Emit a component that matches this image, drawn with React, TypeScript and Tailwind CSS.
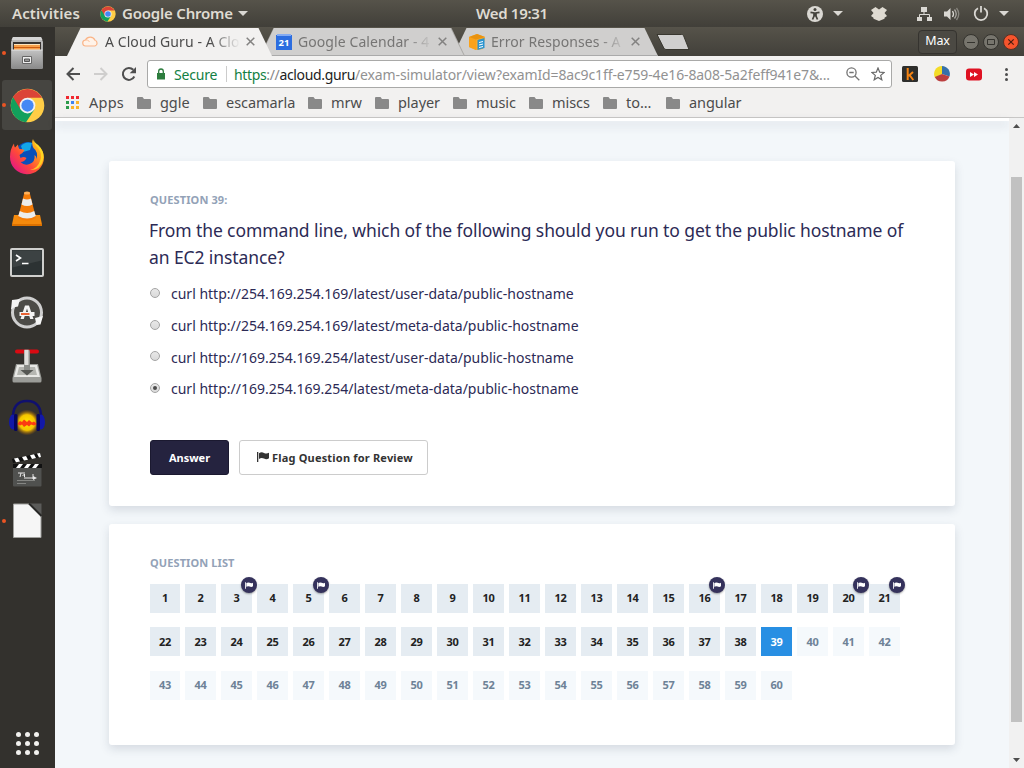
import React from "react";

const flaggedQuestions = [3, 5, 16, 20, 21];
const currentQuestion = 39;

const answers = [
  "curl http://254.169.254.169/latest/user-data/public-hostname",
  "curl http://254.169.254.169/latest/meta-data/public-hostname",
  "curl http://169.254.169.254/latest/user-data/public-hostname",
  "curl http://169.254.169.254/latest/meta-data/public-hostname",
];

const bookmarks = [
  { name: "ggle", width: "w-[66px]" },
  { name: "escamarla", width: "w-[105px]" },
  { name: "mrw", width: "w-[67px]" },
  { name: "player", width: "w-[78px]" },
  { name: "music", width: "w-[76px]" },
  { name: "miscs", width: "w-[74px]" },
  { name: "to...", width: "w-[63px]" },
  { name: "angular", width: "w-[90px]" },
];

function ChromeLogo({ className }: { className: string }) {
  return (
    <svg viewBox="0 0 48 48" className={className}>
      <circle cx="24" cy="24" r="23" fill="#ffcd46" />
      <path d="M24 24 4.1 12.5A23 23 0 0 0 22 46.9L33.5 29.5Z" fill="#12a05c" />
      <path d="M4.1 12.5A23 23 0 0 1 43.9 13.5H24L14.5 29.5Z" fill="#db4437" />
      <circle cx="24" cy="24" r="10.8" fill="#f1f1f1" />
      <circle cx="24" cy="24" r="8.4" fill="#4688f4" />
    </svg>
  );
}

function FilesIcon() {
  return (
    <svg viewBox="0 0 36 36" className="size-9">
      <defs>
        <linearGradient id="cabinet" x1="0" y1="0" x2="0" y2="1">
          <stop offset="0" stopColor="#c2c2c2" />
          <stop offset="1" stopColor="#8c8c8c" />
        </linearGradient>
      </defs>
      <path d="M4 2h28l2 5v26q0 1-1.500 1h-29Q2 34 2 33V7Z" fill="url(#cabinet)" />
      <path d="M4 2h28l1.500 3H2.500Z" fill="#d5d5d5" />
      <path d="M4 7h28v10H4Z" fill="#393431" />
      <path d="M5 10h26v5H5Z" fill="#f7a04a" />
      <path d="M5 12.500h26" stroke="#cf5c12" />
      <path d="M5 9.500h26" stroke="#ffe4bc" />
      <path d="M3 15h30v18H3Z" fill="url(#cabinet)" />
      <path d="M2.500 15h31" stroke="#e3e3e3" />
      <path d="M13.500 21.500h9v7h-9Z" fill="#eee" stroke="#666" />
      <path d="M15.500 24h5v2.500h-5Z" fill="#999" stroke="#555" />
    </svg>
  );
}

function FirefoxIcon() {
  return (
    <svg viewBox="0 0 36 36" className="size-9">
      <defs>
        <linearGradient id="fox" x1="1" y1="0" x2="0.100" y2="0.900">
          <stop offset="0" stopColor="#ffe226" />
          <stop offset="0.350" stopColor="#ff9a1e" />
          <stop offset="0.650" stopColor="#ff4a38" />
          <stop offset="1" stopColor="#e31587" />
        </linearGradient>
      </defs>
      <circle cx="19" cy="16" r="13" fill="#0a4fb9" />
      <path d="M12 7q4-5 11-3l-2 7-7 2Z" fill="#12a6e8" />
      <path d="M5 4.500q0 3 1 4l3-3q0 3 1.500 4.500 3 0 5 1-2 4-5 5l1 3q3-2 6 0-2 4-6 4 4 4 9 2 6-2 5-9 2 1 2 4 2-7-3-11Q22 4 24 0q1 4 5 6 6 6 6 12.500A17 17 0 0 1 1 18Q1 10 5 4.500Z" fill="url(#fox)" />
      <path d="M25 1q0 4 4 8 5 6 2 13-2 7-10 9 11 0 13-10 2-9-5-15-4-3-4-5Z" fill="#ffe023" opacity=".8" />
    </svg>
  );
}

function VlcIcon() {
  return (
    <svg viewBox="0 0 36 36" className="size-9">
      <path d="m5 24-2 9.500q0 1.500 2 1.500h26q2 0 2-1.500L31 24Z" fill="#f58a0c" />
      <path d="M3 33h30v2H3Z" fill="#dc7100" />
      <path d="M15.500 1h5L27 27q-9 5-18 0Z" fill="#f57c08" />
      <path d="m14 7.500-1.500 6q5.500 3 11 0L22 7.500q-4 2-8 0ZM10.800 20l-1.600 5q9 5 17.600 0l-1.600-5q-7 4-14.400 0Z" fill="#ececec" />
      <path d="M15.500 1q2.500-1 5 0l.5 2q-3 1-6 0Z" fill="#ffb15a" />
    </svg>
  );
}

function TerminalIcon() {
  return (
    <svg viewBox="0 0 36 36" className="size-9">
      <rect x="2" y="6" width="32" height="27" rx="1" fill="#2c3233" stroke="#cfcfcd" strokeWidth="2" />
      <path d="M3.500 7.500h29v10l-29 7Z" fill="#3c4243" />
      <path d="m7 12 4.500 3L7 18M13 20.500h6.500" fill="none" stroke="#fff" strokeWidth="1.600" />
    </svg>
  );
}

function UpdaterIcon() {
  return (
    <svg viewBox="0 0 36 36" className="size-9">
      <circle cx="18" cy="17.500" r="14.500" fill="#4c4b47" stroke="#cfcfcf" strokeWidth="3" />
      <path d="m3 5 8-1-2 7.500q-4 0-7 3Zm31 16-8 2 1.500 7 4-.5Z" fill="#f5f5f5" />
      <path d="M11.500 24 16 10.500h4L24.500 24h-3.300L18 13.500 14.800 24Z" fill="#f4f4f4" />
      <path d="M10.500 19h15" stroke="#f4f4f4" strokeWidth="4" />
      <path d="M12 19h8.500" stroke="#e95420" strokeWidth="1.800" />
    </svg>
  );
}

function InstallerIcon() {
  return (
    <svg viewBox="0 0 36 36" className="size-9">
      <path d="m7 17-3.500 14v3q0 1.500 1.500 1.500h26q1.500 0 1.500-1.500v-3L29 17Z" fill="#9b9c98" />
      <path d="m8 18-3 12h26l-3-12Z" fill="#e8e8e5" />
      <path d="m10 20-2 8h20l-2-8Z" fill="#b5b6b1" />
      <rect x="6" y="2.500" width="24" height="4" rx="2" fill="#d90a12" />
      <path d="M15 20h6v3h3.500L18 28.500 11.500 23H15Z" fill="#555753" />
      <path d="M16 2.500h3q2 0 2 2V23h-6V3.500q0-1 1-1Z" fill="#8b8d89" />
      <path d="M15.500 3h4v15h-4Z" fill="#dededb" />
    </svg>
  );
}

function AudacityIcon() {
  return (
    <svg viewBox="0 0 36 36" className="size-9">
      <defs>
        <radialGradient id="sound">
          <stop offset="0" stopColor="#ffe800" />
          <stop offset="0.600" stopColor="#f5c400" />
          <stop offset="1" stopColor="#a85b00" stopOpacity="0" />
        </radialGradient>
      </defs>
      <ellipse cx="18" cy="23.500" rx="13" ry="13" fill="url(#sound)" />
      <path d="m8 25 3-3 2 1 2-2.500 3 2.500 2-2 3 2.500 2-1 3 2.500-3 1.500-3-1-2 2-2-1.500-3 2-2-2.500-2 1Z" fill="#fb3c12" />
      <path d="M4 21Q3 2 18 2t14 19" fill="none" stroke="#10106f" strokeWidth="2.600" />
      <ellipse cx="4" cy="23" rx="4" ry="7.500" fill="#1218a8" />
      <ellipse cx="32" cy="23" rx="4" ry="7.500" fill="#1218a8" />
      <rect x="5" y="15" width="3.500" height="17" rx="1.500" fill="#06065c" />
      <rect x="27.500" y="15" width="3.500" height="17" rx="1.500" fill="#06065c" />
    </svg>
  );
}

function ClapperIcon() {
  return (
    <svg viewBox="0 0 36 36" className="size-9">
      <rect x="4" y="13" width="28.500" height="22.500" rx="1" fill="#50514f" />
      <path d="M4 13h29v4H4Z" fill="#111" />
      <path d="m7 17 3-4h4l-3 4Zm8 0 3-4h4l-3 4Zm8 0 3-4h4l-3 4Z" fill="#fff" />
      <path d="m3 8 28-6 1 4L4 12Z" fill="#111" />
      <path d="m5 7.600 4-.9 2 3.800-4 .8Zm8-1.700 4-.9 2 3.800-4 .8Zm8-1.700 4-.9 2 3.800-4 .8Zm7-1.600 3-.6 1 4-2 .4Z" fill="#fff" />
      <path d="M9 22h7M12 22l-1 4M13.500 25l2-2v3M15 27h11M24 23v5" fill="none" stroke="#e8e8e8" />
      <path d="m24 25 4 2-4 2Z" fill="#e8e8e8" />
      <path d="M8 29.500h18M8 32.500h9" stroke="#858683" />
    </svg>
  );
}

function DocumentIcon() {
  return (
    <svg viewBox="0 0 36 36" className="size-9">
      <path d="M4.500 1h17L32 12v22.500H4.500Z" fill="#f6f6f6" stroke="#a0a09d" />
      <path d="M20 .5h12.500V13Z" fill="#5b5b59" />
      <path d="m20 .5 12.500 12.500" stroke="#282826" strokeWidth="2" />
    </svg>
  );
}

const dockApps = [
  { name: "files", icon: <FilesIcon />, running: true, active: false },
  { name: "chrome", icon: <ChromeLogo className="size-[35px]" />, running: true, active: true },
  { name: "firefox", icon: <FirefoxIcon />, running: false, active: false },
  { name: "vlc", icon: <VlcIcon />, running: false, active: false },
  { name: "terminal", icon: <TerminalIcon />, running: false, active: false },
  { name: "updater", icon: <UpdaterIcon />, running: false, active: false },
  { name: "installer", icon: <InstallerIcon />, running: false, active: false },
  { name: "audacity", icon: <AudacityIcon />, running: false, active: false },
  { name: "clapper", icon: <ClapperIcon />, running: false, active: false },
  { name: "document", icon: <DocumentIcon />, running: true, active: false },
];

function Caret() {
  return (
    <svg viewBox="0 0 10 5" className="h-[5px] w-[10px] shrink-0">
      <path d="M0 0h10L5 5Z" fill="#dad8d3" />
    </svg>
  );
}

function SystemBar() {
  return (
    <header className="grid h-[27px] shrink-0 grid-cols-[476px_72px_1fr] items-center bg-linear-to-b from-[#56534a] to-[#413f39] text-[15px] font-semibold text-[#dfdbd2]">
      <div className="flex items-center pl-3">
        <span className="w-[88px] tracking-[0.1px]">Activities</span>
        <ChromeLogo className="size-4" />
        <span className="ml-1.5 w-[116px] tracking-[-0.2px]">Google Chrome</span>
        <Caret />
      </div>
      <span className="whitespace-nowrap tracking-[-0.3px]">Wed 19:31</span>
      <div className="flex items-center pl-[259px]">
        <svg viewBox="0 0 16 16" className="size-4">
          <circle cx="8" cy="8" r="8" fill="#dad8d3" />
          <circle cx="8" cy="3.600" r="1.500" fill="#45433d" />
          <path d="M3.500 6.300 7 7v3l-1.500 3.500M12.500 6.300 9 7v3l1.500 3.500M8 6.500v4" fill="none" stroke="#45433d" strokeWidth="1.700" />
        </svg>
        <span className="ml-2.5 flex"><Caret /></span>
        <svg viewBox="0 0 16 14" className="ml-[28px] h-[14px] w-4">
          <path d="m4.500 0 3.500 2.500L11.500 0 16 3l-2.500 3L16 9l-2.500 1.700v1L8 14l-5.500-2.300v-1L0 9l2.500-3L0 3Z" fill="#dfdbd2" />
        </svg>
        <svg viewBox="0 0 16 16" className="ml-[29px] size-4">
          <path d="M5 1h6v5H5ZM1 11h5v4H1Zm10 0h5v4h-5Z" fill="#dad8d3" />
          <path d="M8 6v3M3.500 11V8.500h10V11" fill="none" stroke="#dad8d3" />
        </svg>
        <svg viewBox="0 0 16 16" className="ml-3 size-4">
          <path d="M0 5.500h3L6.500 2v12L3 10.500H0Z" fill="#dad8d3" />
          <path d="M8.500 5q2 3 0 6" fill="none" stroke="#dad8d3" strokeWidth="1.300" />
          <path d="M10.500 3.500q3.500 4.500 0 9" fill="none" stroke="#aaa8a3" strokeWidth="1.300" />
          <path d="M12.500 2q4.500 6 0 12" fill="none" stroke="#88867f" strokeWidth="1.300" />
        </svg>
        <svg viewBox="0 0 16 16" className="ml-[13px] size-4">
          <path d="M5 2.200a6.300 6.300 0 1 0 6 0M8 0v6.500" fill="none" stroke="#dad8d3" strokeWidth="1.800" />
        </svg>
        <span className="ml-[10px] flex"><Caret /></span>
      </div>
    </header>
  );
}

function Dock() {
  return (
    <aside className="flex w-[55px] shrink-0 flex-col bg-[#33312d]">
      {dockApps.map((app) => (
        <div key={app.name} className="flex h-[52px] shrink-0 items-center">
          <div className={"ml-0.5 flex size-[50px] items-center rounded-[3px] " + (app.active ? "bg-[#464541]" : "")}>
            <span className={"size-[4px] shrink-0 rounded-full " + (app.running ? "bg-[#ea5423]" : "")} />
            <span className="flex w-[42px] justify-center">{app.icon}</span>
          </div>
        </div>
      ))}
      <div className="mt-auto mb-[13px] grid grid-cols-3 gap-[3px] self-start pl-[15px]">
        {Array.from({ length: 9 }, (_, i) => (
          <span key={i} className="m-[0.500px] size-[5px] rounded-full bg-[#f2f1ee]" />
        ))}
      </div>
    </aside>
  );
}

function TabClose() {
  return (
    <svg viewBox="0 0 9 9" className="size-[9px] shrink-0">
      <path d="m.7.7 7.600 7.600M8.300.7.700 8.300" stroke="#838281" strokeWidth="1.500" />
    </svg>
  );
}

function TabStrip() {
  return (
    <div className="flex h-[29px] shrink-0 bg-linear-to-b from-[#56534a] to-[#42403a] text-[14px] tracking-[0.08px]">
      <div className="z-20 ml-3 flex w-[205px] shrink-0 items-center bg-[#f2f1f0] pl-[15px] text-[#4c4c4c] [clip-path:polygon(13.500px_1px,191.500px_1px,205px_100%,0_100%)]">
        <svg viewBox="0 0 17 11" className="h-[11px] w-[17px] shrink-0">
          <path d="M4 10a3 3 0 0 1-.5-6A5.200 5.200 0 0 1 13 4.300 3 3 0 0 1 13 10Z" fill="#fff3e9" stroke="#fab487" strokeWidth="1.200" />
          <path d="M3.500 4Q6 3 7.500 6" fill="none" stroke="#fbc29c" />
        </svg>
        <span className="ml-1.5 w-[135px] overflow-hidden whitespace-nowrap [mask-image:linear-gradient(to_right,#000_78%,transparent_100%)]">A Cloud Guru - A Clo</span>
        <span className="ml-1.5 flex"><TabClose /></span>
      </div>
      <div className="z-10 -ml-3 w-[205px] shrink-0 bg-[#aaa8a5] [clip-path:polygon(13.500px_1px,191.500px_1px,205px_100%,0_100%)]">
        <div className="flex h-full items-center border-b border-[#aaa] bg-[#d0cfce] pt-px pl-4 text-[#767574] [clip-path:polygon(14px_1px,190.500px_1px,204px_100%,1px_100%)]">
          <svg viewBox="0 0 16 16" className="size-4 shrink-0">
            <path d="M0 1h16v15H0Z" fill="#2c6de0" />
            <path d="M1 0h14v2H1Z" fill="#84abf2" />
            <text x="8" y="12" textAnchor="middle" fontSize="9.500" fontWeight="700" fill="#fff" className="tracking-normal">21</text>
          </svg>
          <span className="ml-1.5 w-[135px] overflow-hidden whitespace-nowrap [mask-image:linear-gradient(to_right,#000_80%,transparent_100%)]">Google Calendar - 4</span>
          <span className="ml-[5px] flex"><TabClose /></span>
        </div>
      </div>
      <div className="-ml-3 flex w-[205px] shrink-0 items-center border-b border-[#aaa] bg-[#d0cfce] pt-px pl-4 text-[#767574] [clip-path:polygon(13.500px_1px,191.500px_1px,205px_100%,0_100%)]">
        <svg viewBox="0 0 16 16" className="size-4 shrink-0">
          <path d="m0 3 8-3 8 3-2 12-7 1-7-3Z" fill="#fba928" />
          <path d="m0 3 7 2v11l-7-3Z" fill="#faa21b" />
          <path d="m0 3 8-3 8 3-9 2.500Z" fill="#e8920f" />
          <path d="m8.500 6 7-2v10l-7 2Z" fill="#2a94cf" />
          <path d="m10 8.500 4-1M10 11l4-1m-4 3.500 4-1" stroke="#fff" />
        </svg>
        <span className="ml-1.5 w-[135px] overflow-hidden whitespace-nowrap [mask-image:linear-gradient(to_right,#000_80%,transparent_100%)]">Error Responses - A</span>
        <span className="ml-[5px] flex"><TabClose /></span>
      </div>
      <svg viewBox="0 0 34 16" className="mt-[7px] -ml-[2px] h-4 w-[34px] shrink-0">
        <path d="M1 .5h24.500q1.500 0 2 1L33 15.500H10q-1.500 0-2.200-1.500Z" fill="#d0cfce" stroke="#39372f" />
      </svg>
      <div className="mr-[5px] ml-auto flex shrink-0 items-center gap-1">
        <span className="mr-0.5 flex h-6 w-[39px] items-center justify-center rounded-[4px] border border-[#35332f] bg-[#4b4943] text-[12.500px] tracking-[-0.200px] text-white">Max</span>
        <svg viewBox="0 0 16 16" className="size-4">
          <circle cx="8" cy="8" r="7.500" fill="#77756d" stroke="#34332e" />
          <path d="M4 8.500h8" stroke="#34332e" />
        </svg>
        <svg viewBox="0 0 16 16" className="size-4">
          <circle cx="8" cy="8" r="7.500" fill="#77756d" stroke="#34332e" />
          <path d="M4.500 5.500h7v5h-7Z" fill="none" stroke="#34332e" />
        </svg>
        <svg viewBox="0 0 16 16" className="size-4">
          <circle cx="8" cy="8" r="7.500" fill="#f6542c" stroke="#593024" />
          <path d="m5.300 5.300 5.400 5.400m0-5.400-5.400 5.400" stroke="#4b1d10" strokeWidth="1.200" />
        </svg>
      </div>
    </div>
  );
}

function Toolbar() {
  return (
    <div className="flex h-[36px] shrink-0 items-center pl-[11px]">
      <svg viewBox="0 0 14 14" className="size-[14px]">
        <path d="M14 7H1.500M7.500 1l-6 6 6 6" fill="none" stroke="#4f4f4f" strokeWidth="2" />
      </svg>
      <svg viewBox="0 0 14 14" className="ml-[14px] size-[14px]">
        <path d="M0 7h12.500M6.500 1l6 6-6 6" fill="none" stroke="#cfcecd" strokeWidth="2" />
      </svg>
      <svg viewBox="0 0 16 16" className="ml-[13px] size-4">
        <path d="M13.300 10.500A6 6 0 1 1 12.300 3.800" fill="none" stroke="#4f4f4f" strokeWidth="2" />
        <path d="M15 1v6.300H8.700Z" fill="#4f4f4f" />
      </svg>
      <div className="ml-[10px] flex h-[28px] w-[745px] items-center rounded-[3px] border border-[#a9a9a8] bg-white text-[14px] whitespace-nowrap">
        <svg viewBox="0 0 10 12" className="ml-2 h-3 w-[10px]">
          <path d="M1 5h8v6.500H1Z" fill="#2d7d3e" />
          <path d="M2.700 5V3.300a2.300 2.300 0 0 1 4.600 0V5" fill="none" stroke="#2d7d3e" strokeWidth="1.300" />
        </svg>
        <span className="ml-2 w-[44px] tracking-[-0.2px] text-[#138043]">Secure</span>
        <span className="ml-2 h-4 w-px bg-[#ccc]" />
        <span className="ml-[7px] w-[121px] tracking-[-0.350px]">
          <span className="text-[#138043]">https</span>
          <span className="text-[#888]">://</span>
          <span className="text-[#222]">acloud.guru</span>
        </span>
        <span className="w-[475px] tracking-[-0.120px] text-[#929292]">/exam-simulator/view?examId=8ac9c1ff-e759-4e16-8a08-5a2feff941e7&amp;...</span>
        <svg viewBox="0 0 14 14" className="ml-4 size-[14px]">
          <circle cx="5.500" cy="5.500" r="4.600" fill="none" stroke="#737373" strokeWidth="1.300" />
          <path d="m9 9 4.300 4.300M3.300 5.500h4.400" stroke="#737373" strokeWidth="1.300" />
        </svg>
        <svg viewBox="0 0 14 14" className="ml-[11px] size-[14px]">
          <path d="m7 1 1.700 4.200 4.500.3-3.500 2.900 1.100 4.400L7 10.400l-3.800 2.400 1.100-4.400L.8 5.500l4.500-.3Z" fill="none" stroke="#686868" strokeWidth="1.200" />
        </svg>
      </div>
      <svg viewBox="0 0 16 16" className="ml-[10px] size-4">
        <rect width="16" height="16" rx="1.500" fill="#2e2e2c" />
        <path d="M5.700 2v12M11 6 6.500 10M7.500 9l3.800 5" fill="none" stroke="#f58312" strokeWidth="2" />
      </svg>
      <svg viewBox="0 0 16 16" className="ml-4 size-4">
        <path d="M8 8 1.100 12A8 8 0 0 1 8 0Z" fill="#f4dc27" />
        <path d="M8 8V0a8 8 0 0 1 7.500 10.500Z" fill="#3670aa" />
        <path d="m8 8 7.500 2.500A8 8 0 0 1 .8 11Z" fill="#bc3f3f" />
      </svg>
      <svg viewBox="0 0 16 13" className="ml-4 h-[13px] w-4">
        <rect y=".5" width="16" height="12" rx="3" fill="#df1222" />
        <path d="m4 4 4 2.500V4l4 2.500L8 9V6.500L4 9Z" fill="#fff" />
      </svg>
      <div className="ml-[23px] flex flex-col gap-[2px]">
        <span className="size-[3px] rounded-full bg-[#4d4d4d]" />
        <span className="size-[3px] rounded-full bg-[#4d4d4d]" />
        <span className="size-[3px] rounded-full bg-[#4d4d4d]" />
      </div>
    </div>
  );
}

const appDots = [
  "bg-[#f02830]", "bg-[#f02830]", "bg-[#f02830]",
  "bg-[#2c9a4b]", "bg-[#3f83f2]", "bg-[#fbb32c]",
  "bg-[#2c9a4b]", "bg-[#fbb32c]", "bg-[#fbb32c]",
];

function BookmarkBar() {
  return (
    <div className="flex h-[26px] shrink-0 items-center border-b border-[#c8c7c6] pb-[4px] pl-[11px] text-[14.500px] tracking-[-0.050px] text-[#4c4c4c]">
      <div className="grid grid-cols-3 gap-[2px]">
        {appDots.map((color, i) => (
          <span key={i} className={"size-[3px] " + color} />
        ))}
      </div>
      <span className="ml-[10px] w-[48px] tracking-[0.250px]">Apps</span>
      {bookmarks.map((b) => (
        <div key={b.name} className={"flex shrink-0 items-center gap-[9px] " + b.width}>
          <svg viewBox="0 0 14 12" className="h-3 w-[14px] shrink-0">
            <path d="M1 0h4.500L7 2h6q1 0 1 1v8q0 1-1 1H1q-1 0-1-1V1q0-1 1-1Z" fill="#898989" />
          </svg>
          {b.name}
        </div>
      ))}
    </div>
  );
}

function FlagGlyph({ className }: { className: string }) {
  return (
    <svg viewBox="0 0 12 10" className={className}>
      <path d="M0 0h1.300v10H0ZM2 1.200Q4.500-.4 7 .9t5-.2V6.300Q9.500 7.800 7 6.600T2 6.900Z" fill="currentColor" />
    </svg>
  );
}

function QuestionCard() {
  return (
    <section className="mt-[40px] h-[345px] shrink-0 rounded-[3px] bg-white px-[41px] pt-[31px] shadow-[0_4px_10px_rgba(50,60,90,0.150)]">
      <h2 className="text-[11px] leading-4 font-bold tracking-[0.120px] text-[#93a2b7]">QUESTION 39:</h2>
      <p className="mt-[9px] -ml-px w-[770px] text-[17.500px] leading-[27px] tracking-[-0.100px] text-[#2c2a55]">
        From the command line, which of the following should you run to get the public hostname of
        <br />
        an EC2 instance?
      </p>
      <ul className="mt-[7px] text-[14px] text-[#2c2a55]">
        {answers.map((answer, i) => (
          <li key={answer} className="flex h-[31.700px] items-center">
            <span className="mb-0.5 flex size-[10px] items-center justify-center rounded-full border border-[#a4a4a4] bg-linear-to-b from-[#e8e8e8] to-[#dadada]">
              {i === 3 && <span className="size-1 rounded-full bg-[#4c4c4c]" />}
            </span>
            <span className="ml-[11px]">{answer}</span>
          </li>
        ))}
      </ul>
      <div className="mt-[35px] flex gap-[10px] text-[11px] font-bold">
        <button className="h-[35px] w-[79px] rounded-[3px] border border-[#1b1930] bg-[#25233f] pt-0.5 text-white">Answer</button>
        <button className="flex h-[35px] w-[189px] items-center rounded-[3px] border border-[#ccc] bg-white pt-0.5 pl-[17px] tracking-[0.190px] text-[#333]">
          <FlagGlyph className="mr-[3px] mb-0.5 h-[10px] w-[12px]" />
          Flag Question for Review
        </button>
      </div>
    </section>
  );
}

function cellColors(n: number) {
  if (n === currentQuestion) return "bg-[#288fe3] text-white";
  return n < currentQuestion ? "bg-[#e5ecf2] text-[#222]" : "bg-[#f5f9fc] text-[#6e8297]";
}

function QuestionList() {
  return (
    <section className="mt-[18px] h-[221px] shrink-0 rounded-[3px] bg-white pt-[31px] pl-[41px] shadow-[0_4px_10px_rgba(50,60,90,0.150)]">
      <h2 className="text-[11px] leading-4 font-bold tracking-[0.100px] text-[#93a2b7]">QUESTION LIST</h2>
      <div className="mt-[13px] grid grid-cols-[30px_repeat(20,31px)] gap-x-[5px] gap-y-[14.400px] text-[11px] font-bold tracking-[-0.300px]">
        {Array.from({ length: 60 }, (_, i) => i + 1).map((n) => (
          <div key={n} className={"relative flex h-[29px] items-center justify-center " + cellColors(n)}>
            {n}
            {flaggedQuestions.includes(n) && (
              <span className="absolute -top-[7px] -right-[5px] flex size-4 items-center justify-center rounded-full bg-[#35325c] text-white shadow-[0_1px_2px_rgba(0,0,0,0.350)]">
                <FlagGlyph className="h-[7px] w-[8px]" />
              </span>
            )}
          </div>
        ))}
      </div>
    </section>
  );
}

function Scrollbar() {
  return (
    <div className="flex w-[15px] shrink-0 flex-col items-center bg-[#f1f1f1]">
      <svg viewBox="0 0 7 4" className="mt-[6px] h-1 w-[7px] shrink-0">
        <path d="M3.500 0 7 4H0Z" fill="#4e4e4e" />
      </svg>
      <div className="mt-[49px] h-[545px] w-[11px] shrink-0 bg-[#c1c1c1]" />
      <svg viewBox="0 0 7 4" className="mt-auto mb-[6px] h-1 w-[7px] shrink-0">
        <path d="M3.500 4 7 0H0Z" fill="#4e4e4e" />
      </svg>
    </div>
  );
}

export default function App() {
  return (
    <div className="flex h-[768px] w-[1024px] flex-col overflow-hidden font-['Noto_Sans',sans-serif]">
      <SystemBar />
      <div className="flex min-h-0 flex-1">
        <Dock />
        <div className="flex min-w-0 flex-1 flex-col bg-[#f2f1f0]">
          <TabStrip />
          <Toolbar />
          <BookmarkBar />
          <div className="flex min-h-0 flex-1">
            <main className="flex min-w-0 flex-1 flex-col bg-[#f3f7fa]">
              <div className="h-[3px] shrink-0 bg-white shadow-[0_4px_10px_rgba(50,60,90,0.180)]" />
              <div className="flex w-[900px] flex-col pl-[54px]">
                <QuestionCard />
                <QuestionList />
              </div>
            </main>
            <Scrollbar />
          </div>
        </div>
      </div>
    </div>
  );
}
